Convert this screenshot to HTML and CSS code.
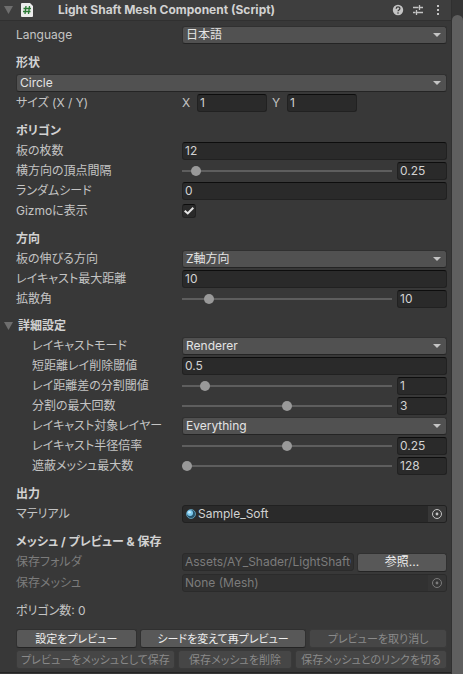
FILE: index.html
```html
<!DOCTYPE html>
<html lang="ja">

<head>
    <meta charset="UTF-8">
    <meta name="viewport" content="width=device-width, initial-scale=1.0">
    <title>Light Shaft Mesh Component</title>
    <link rel="stylesheet" href="styles.css">
</head>

<body>
    <main class="inspector">
        <header class="component-header">
            <button class="foldout" aria-label="Toggle component"></button>
            <svg class="script-icon" width="12" height="14" viewBox="0 0 12 14">
                <path d="M1 0H9L12 3V13Q12 14 11 14H1Q0 14 0 13V1Q0 0 1 0Z" fill="#ececec" />
                <path d="M5 3L4 11M8.500 3L7.500 11M2.500 5.500H10M2 8.500H9.500" stroke="#2c7a35" stroke-width="1.300" fill="none" />
            </svg>
            <h1>Light Shaft Mesh Component (Script)</h1>
            <button class="icon-button" aria-label="Help">
                <svg width="12" height="12" viewBox="0 0 12 12">
                    <circle cx="6" cy="6" r="5.200" fill="#c4c4c4" />
                    <path d="M4.200 4.700C4.200 2.400 7.900 2.400 7.900 4.600C7.900 6 6 5.900 6 7.300" stroke="#3c3c3c" stroke-width="1.300" fill="none" />
                    <circle cx="6" cy="9" r="0.800" fill="#3c3c3c" />
                </svg>
            </button>
            <button class="icon-button" aria-label="Presets">
                <svg width="12" height="12" viewBox="0 0 12 12">
                    <path d="M1 3.500H6.500M7.500 3.500H11M7.500 1V6M1 8.500H3.500M4.500 8.500H11M4.500 6V11" stroke="#c4c4c4" stroke-width="1.300" fill="none" />
                </svg>
            </button>
            <button class="icon-button" aria-label="More">
                <svg width="12" height="12" viewBox="0 0 12 12">
                    <path d="M5 1H7V3H5ZM5 5H7V7H5ZM5 9H7V11H5Z" fill="#c4c4c4" />
                </svg>
            </button>
        </header>

        <div class="component-body">
            <section>
                <div class="row">
                    <label for="language">Language</label>
                    <div class="dropdown"><select id="language"><option>日本語</option><option>English</option></select></div>
                </div>
            </section>

            <section>
                <h2>形状</h2>
                <div class="row">
                    <div class="dropdown"><select id="shape" aria-label="形状"><option>Circle</option></select></div>
                </div>
                <div class="row">
                    <span class="label">サイズ (X / Y)</span>
                    <div class="vector">
                        <div class="axis"><label for="sizeX">X</label><input type="text" id="sizeX" value="1"></div>
                        <div class="axis"><label for="sizeY">Y</label><input type="text" id="sizeY" value="1"></div>
                    </div>
                </div>
            </section>

            <section>
                <h2>ポリゴン</h2>
                <div class="row">
                    <label for="planes">板の枚数</label>
                    <input type="text" id="planes" value="12">
                </div>
                <div class="row">
                    <label for="spacing">横方向の頂点間隔</label>
                    <input type="range" id="spacing" min="0" max="200" value="9">
                    <input type="text" class="number" value="0.25" aria-label="横方向の頂点間隔">
                </div>
                <div class="row">
                    <label for="seed">ランダムシード</label>
                    <input type="text" id="seed" value="0">
                </div>
                <div class="row">
                    <label for="gizmo">Gizmoに表示</label>
                    <input type="checkbox" id="gizmo" checked>
                </div>
            </section>

            <section>
                <h2>方向</h2>
                <div class="row">
                    <label for="axis">板の伸びる方向</label>
                    <div class="dropdown"><select id="axis"><option>Z軸方向</option></select></div>
                </div>
                <div class="row">
                    <label for="rayMax">レイキャスト最大距離</label>
                    <input type="text" id="rayMax" value="10">
                </div>
                <div class="row">
                    <label for="spread">拡散角</label>
                    <input type="range" id="spread" min="0" max="200" value="22">
                    <input type="text" class="number" value="10" aria-label="拡散角">
                </div>
            </section>

            <section class="details">
                <h2><button class="foldout" aria-label="詳細設定"></button>詳細設定</h2>
                <div class="row">
                    <label for="rayMode">レイキャストモード</label>
                    <div class="dropdown"><select id="rayMode"><option>Renderer</option></select></div>
                </div>
                <div class="row">
                    <label for="rayMin">短距離レイ削除閾値</label>
                    <input type="text" id="rayMin" value="0.5">
                </div>
                <div class="row">
                    <label for="splitThreshold">レイ距離差の分割閾値</label>
                    <input type="range" id="splitThreshold" min="0" max="200" value="18">
                    <input type="text" class="number" value="1" aria-label="レイ距離差の分割閾値">
                </div>
                <div class="row">
                    <label for="splitMax">分割の最大回数</label>
                    <input type="range" id="splitMax" min="0" max="6" value="3">
                    <input type="text" class="number" value="3" aria-label="分割の最大回数">
                </div>
                <div class="row">
                    <label for="rayLayer">レイキャスト対象レイヤー</label>
                    <div class="dropdown"><select id="rayLayer"><option>Everything</option></select></div>
                </div>
                <div class="row">
                    <label for="rayRadius">レイキャスト半径倍率</label>
                    <input type="range" id="rayRadius" min="0" max="0.5" step="0.01" value="0.25">
                    <input type="text" class="number" value="0.25" aria-label="レイキャスト半径倍率">
                </div>
                <div class="row">
                    <label for="occluders">遮蔽メッシュ最大数</label>
                    <input type="range" id="occluders" min="128" max="4096" value="128">
                    <input type="text" class="number" value="128" aria-label="遮蔽メッシュ最大数">
                </div>
            </section>

            <section>
                <h2>出力</h2>
                <div class="row">
                    <span class="label">マテリアル</span>
                    <div class="object-field">
                        <svg width="10" height="10" viewBox="0 0 10 10">
                            <circle cx="5" cy="5" r="4.500" fill="#24536c" stroke="#6fa9c4" stroke-width="0.800" />
                            <circle cx="4" cy="4" r="3" fill="#7cc9ee" />
                            <circle cx="3.500" cy="3.200" r="1.300" fill="#c9efff" />
                        </svg>
                        <span>Sample_Soft</span>
                        <button class="picker" aria-label="マテリアルを選択">
                            <svg width="12" height="12" viewBox="0 0 12 12">
                                <circle cx="6" cy="6" r="4.500" fill="none" stroke="#c4c4c4" />
                                <circle cx="6" cy="6" r="1.400" fill="#c4c4c4" />
                            </svg>
                        </button>
                    </div>
                </div>
            </section>

            <section>
                <h2>メッシュ / プレビュー &amp; 保存</h2>
                <div class="row folder">
                    <label for="folder" class="disabled">保存フォルダ</label>
                    <input type="text" id="folder" value="Assets/AY_Shader/LightShaftGenerator" disabled>
                    <button class="button">参照...</button>
                </div>
                <div class="row">
                    <span class="label disabled">保存メッシュ</span>
                    <div class="object-field disabled">
                        <span>None (Mesh)</span>
                        <button class="picker" aria-label="保存メッシュを選択" disabled>
                            <svg width="12" height="12" viewBox="0 0 12 12">
                                <circle cx="6" cy="6" r="4.500" fill="none" stroke="#7c7c7c" />
                                <circle cx="6" cy="6" r="1.400" fill="#7c7c7c" />
                            </svg>
                        </button>
                    </div>
                </div>
            </section>

            <p class="row">ポリゴン数: 0</p>

            <div class="actions preview-actions">
                <button class="button">設定をプレビュー</button>
                <button class="button">シードを変えて再プレビュー</button>
                <button class="button" disabled>プレビューを取り消し</button>
            </div>
            <div class="actions save-actions">
                <button class="button" disabled>プレビューをメッシュとして保存</button>
                <button class="button" disabled>保存メッシュを削除</button>
                <button class="button" disabled>保存メッシュとのリンクを切る</button>
            </div>
        </div>
    </main>
    <div class="scrollbar"><div class="scrollbar-thumb"></div></div>
</body>

</html>
```
FILE: styles.css
```css
* {
    box-sizing: border-box;
}

body {
    display: flex;
    margin: 0;
    min-height: 100vh;
    background-color: #383838;
    color: #c4c4c4;
    font-family: Inter, "Noto Sans CJK JP", sans-serif;
    font-size: 12px;
    line-height: 20px;
    font-feature-settings: "palt";
}

button,
input,
select {
    margin: 0;
    padding: 0;
    border: none;
    color: inherit;
    font: inherit;
    font-feature-settings: inherit;
}

h1,
h2,
p {
    margin: 0;
    font-size: 12px;
}

h2 {
    height: 20px;
    color: #d2d2d2;
}

.inspector {
    flex: 1;
    min-width: 0;
    border-right: 1px solid #303030;
}

.component-header {
    display: flex;
    align-items: center;
    gap: 8px;
    height: 21px;
    padding: 0 7px 0 4px;
    background-color: #3e3e3e;
    border-bottom: 1px solid #303030;
}

.component-header h1 {
    flex: 1;
    margin-left: 17px;
    color: #d2d2d2;
    white-space: nowrap;
}

.foldout {
    width: 9px;
    height: 8px;
    background-color: #6e6e6e;
    clip-path: polygon(0 0, 100% 0, 50% 100%);
}

.icon-button {
    display: flex;
    background: none;
}

.component-body {
    padding: 4px 4px 3px 16px;
    border-bottom: 1px solid #242424;
}

section {
    margin-bottom: 8px;
}

.row {
    display: flex;
    align-items: center;
    height: 20px;
}

.row > label,
.row > .label {
    flex: none;
    width: 166px;
    white-space: nowrap;
}

.row > .disabled {
    color: #7c7c7c;
}

input[type="text"] {
    flex: 1;
    min-width: 0;
    width: 100%;
    height: 18px;
    padding: 0 2px;
    background-color: #2a2a2a;
    border: 1px solid #212121;
    border-top-color: #0d0d0d;
    border-radius: 3px;
    color: #d2d2d2;
}

input[type="text"]:disabled {
    background-color: #313131;
    border-color: #2b2b2b;
    color: #7c7c7c;
}

input[type="text"].number {
    flex: none;
    width: 50px;
    margin-left: 5px;
}

.dropdown {
    position: relative;
    flex: 1;
    display: flex;
}

.dropdown::after {
    content: "";
    position: absolute;
    top: 7px;
    right: 6px;
    width: 8px;
    height: 4px;
    background-color: #c4c4c4;
    clip-path: polygon(0 0, 100% 0, 50% 100%);
    pointer-events: none;
}

select {
    appearance: none;
    width: 100%;
    height: 18px;
    padding: 0 16px 0 3px;
    background-color: #515151;
    border: 1px solid #303030;
    border-bottom-color: #242424;
    border-radius: 3px;
    color: #e4e4e4;
    line-height: 16px;
}

.vector {
    flex: 1;
    display: grid;
    grid-template-columns: repeat(3, 1fr);
    gap: 5px;
}

.axis {
    display: flex;
    align-items: center;
}

.axis label {
    width: 15px;
    flex: none;
}

input[type="range"] {
    appearance: none;
    flex: 1;
    min-width: 0;
    height: 10px;
    background: none;
}

input[type="range"]::-webkit-slider-runnable-track {
    height: 2px;
    background-color: #5e5e5e;
}

input[type="range"]::-webkit-slider-thumb {
    appearance: none;
    width: 10px;
    height: 10px;
    margin-top: -4px;
    background-color: #999999;
    border-radius: 50%;
}

input[type="checkbox"] {
    appearance: none;
    display: flex;
    align-items: center;
    justify-content: center;
    width: 14px;
    height: 14px;
    background-color: #2a2a2a;
    border: 1px solid #212121;
    border-top-color: #0d0d0d;
    border-radius: 3px;
}

input[type="checkbox"]:checked::before {
    content: "";
    width: 10px;
    height: 8px;
    background-color: #e4e4e4;
    clip-path: polygon(0 55%, 14% 38%, 37% 62%, 86% 0, 100% 18%, 38% 98%);
}

.details {
    margin-top: -1px;
}

.details h2 {
    display: flex;
    align-items: center;
    gap: 5px;
    margin-left: -12px;
}

.details .row > label {
    width: 166px;
    padding-left: 16px;
}

.object-field {
    flex: 1;
    display: flex;
    align-items: center;
    gap: 2px;
    height: 18px;
    padding-left: 3px;
    overflow: hidden;
    background-color: #2a2a2a;
    border: 1px solid #212121;
    border-radius: 3px;
    color: #d2d2d2;
}

.object-field.disabled {
    padding-left: 2px;
    background-color: #313131;
    border-color: #2b2b2b;
}

.picker {
    display: flex;
    align-items: center;
    justify-content: center;
    width: 18px;
    height: 16px;
    margin-left: auto;
    background-color: #373737;
}

.object-field.disabled .picker {
    background-color: #353535;
}

.button {
    height: 19px;
    background-color: #585858;
    border: 1px solid #303030;
    border-bottom-color: #242424;
    border-radius: 3px;
    color: #eeeeee;
    line-height: 16px;
    white-space: nowrap;
}

.button:disabled {
    background-color: #464646;
    border-color: #3a3a3a;
    color: #8a8a8a;
}

.folder {
    margin-bottom: 1px;
}

.folder .button {
    width: 90px;
    margin-left: 3px;
}

.actions {
    display: grid;
    gap: 3px;
    margin-top: 2px;
}

.actions .button {
    font-size: 11px;
}

.preview-actions {
    grid-template-columns: 121fr 167fr 138fr;
    margin-top: 8px;
}

.save-actions {
    grid-template-columns: 159fr 114fr 152fr;
}

.scrollbar {
    width: 11px;
    padding-top: 15px;
    background-color: #353535;
    display: flex;
}

.scrollbar-thumb {
    flex: 1;
    background-color: #5f5f5f;
    border-radius: 6px 6px 0 0;
}
```
